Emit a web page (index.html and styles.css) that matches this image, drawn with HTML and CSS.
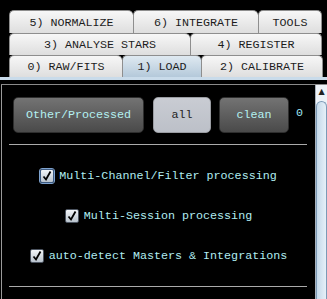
FILE: index.html
```html
<!DOCTYPE html>
<html lang="en">
<head>
    <meta charset="UTF-8">
    <title>Load</title>
    <link rel="stylesheet" href="styles.css">
</head>
<body>
    <div class="tabs">
        <div class="tab-row row-top">
            <div class="tab w124">5) NORMALIZE</div>
            <div class="tab w125">6) INTEGRATE</div>
            <div class="tab w64">TOOLS</div>
        </div>
        <div class="tab-row">
            <div class="tab w181">3) ANALYSE STARS</div>
            <div class="tab w132">4) REGISTER</div>
        </div>
        <div class="tab-row">
            <div class="tab w113">0) RAW/FITS</div>
            <div class="tab w79 selected">1) LOAD</div>
            <div class="tab w122">2) CALIBRATE</div>
        </div>
    </div>
    <div class="tab-base"></div>

    <div class="panel">
        <div class="content">
            <div class="buttons">
                <button class="btn dark w131">Other/Processed</button>
                <button class="btn light w58">all</button>
                <button class="btn dark w70">clean</button>
                <span class="count">0</span>
            </div>
            <hr class="sep">
            <div class="options">
                <label class="option">
                    <span class="box focused"><svg width="12" height="12" viewBox="0 0 12 12"><path d="M2.5 6.5 L5 9.5 L9.5 1.5" fill="none" stroke="#000" stroke-width="1.8"/></svg></span>
                    Multi-Channel/Filter processing
                </label>
                <label class="option">
                    <span class="box"><svg width="12" height="12" viewBox="0 0 12 12"><path d="M2.5 6.5 L5 9.5 L9.5 1.5" fill="none" stroke="#000" stroke-width="1.8"/></svg></span>
                    Multi-Session processing
                </label>
                <label class="option">
                    <span class="box"><svg width="12" height="12" viewBox="0 0 12 12"><path d="M2.5 6.5 L5 9.5 L9.5 1.5" fill="none" stroke="#000" stroke-width="1.8"/></svg></span>
                    auto-detect Masters &amp; Integrations
                </label>
            </div>
            <hr class="sep last">
        </div>
        <div class="scrollbar">
            <div class="arrow">&#9650;</div>
            <div class="thumb"></div>
        </div>
    </div>
</body>
</html>
```

FILE: styles.css
```css
body {
    margin: 0;
    background-color: #000;
    font-family: "Liberation Mono", "Courier New", monospace;
    font-size: 11.7px;
    height: 299px;
    overflow: hidden;
}
.tabs {
    padding: 10px 0 0 9px;
}
.tab-row {
    display: flex;
    height: 22px;
}
.row-top {
    height: 23px;
}
.tab {
    box-sizing: border-box;
    border: 1px solid #8e8e8e;
    border-bottom: none;
    border-right: none;
    border-radius: 5px 5px 0 0;
    background: linear-gradient(#f7f7f7, #dedede);
    color: #1c1c1c;
    display: flex;
    align-items: center;
    justify-content: center;
    padding-top: 1px;
}
.tab:last-child {
    border-right: 1px solid #8e8e8e;
}
.tab.selected {
    background: linear-gradient(#dfe9f1, #b4c9da);
}
.w124 { width: 124px; }
.w125 { width: 125px; }
.w64 { width: 64px; }
.w181 { width: 181px; }
.w132 { width: 132px; }
.w113 { width: 113px; }
.w79 { width: 79px; }
.w122 { width: 122px; }
.tab-base {
    height: 3px;
    background-color: #c9dbea;
}
.panel {
    display: flex;
    margin-top: 4px;
    margin-left: 1px;
    height: 215px;
    border-top: 1px solid #8a8a8a;
}
.content {
    flex: 1;
    border-left: 1px solid #9a9a9a;
}
.buttons {
    display: flex;
    align-items: center;
    padding: 12px 0 0 11px;
}
.btn {
    height: 36px;
    margin-right: 8px;
    font-family: inherit;
    font-size: 11.7px;
    border-radius: 5px;
    padding: 0;
}
.btn.dark {
    background: linear-gradient(#737373, #4a4a4a);
    border: 1px solid #2e2e2e;
    color: #b4f1f1;
}
.btn.light {
    background: linear-gradient(#c9ccd3, #bcc0c8);
    border: 1px solid #9a9ca2;
    color: #1e1e1e;
}
.w131 { width: 131px; margin-right: 9px; }
.w58 { width: 58px; }
.w70 { width: 70px; }
.count {
    color: #9ee7f3;
    margin-left: -1px;
    margin-top: -4px;
}
.sep {
    border: none;
    border-top: 1px solid #aaa;
    margin: 11px 8px 0 7px;
}
.sep.last {
    margin-top: 0;
}
.options {
    display: flex;
    flex-direction: column;
    align-items: center;
    gap: 24px;
    padding: 23px 0 22px;
}
.option {
    display: flex;
    align-items: center;
    gap: 5px;
    color: #b0ecf0;
    height: 16px;
}
.box {
    box-sizing: border-box;
    width: 14px;
    height: 14px;
    border: 1px solid #4c5460;
    border-radius: 2px;
    background: linear-gradient(#f2f5f8, #b9c3cd);
    display: flex;
    align-items: center;
    justify-content: center;
}
.box.focused {
    outline: 1px solid #7fa3cf;
    outline-offset: 0;
    border-color: #3d5a80;
}
.scrollbar {
    width: 11px;
    background-color: #eef3f8;
    border-left: 1px solid #a9b3bd;
    display: flex;
    flex-direction: column;
}
.arrow {
    height: 16px;
    font-size: 8px;
    color: #222;
    text-align: center;
    line-height: 14px;
    font-family: "DejaVu Sans", sans-serif;
}
.thumb {
    flex: 1;
    border-radius: 6px 6px 0 0;
    border: 1px solid #7c9ab6;
    border-bottom: none;
    background: linear-gradient(to right, #c5d9ea, #e6f0f8);
}
```
